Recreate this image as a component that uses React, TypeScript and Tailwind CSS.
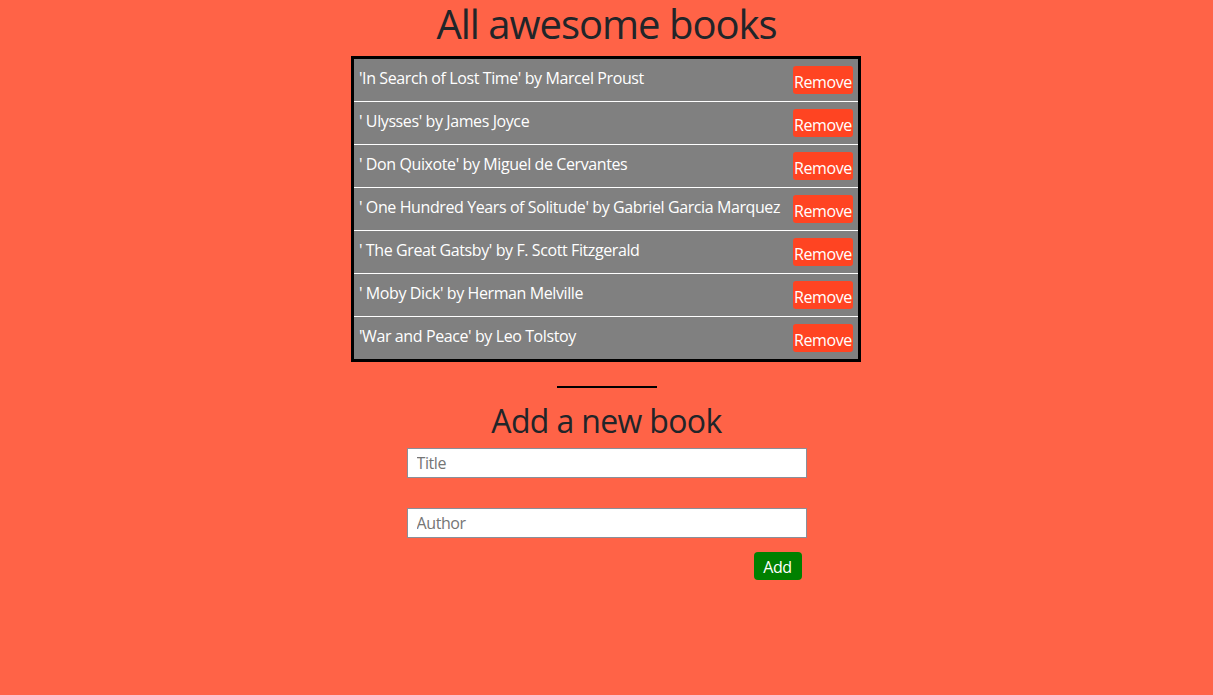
import React from 'react';

const books = [
  "'In Search of Lost Time' by Marcel Proust",
  "' Ulysses' by James Joyce",
  "' Don Quixote' by Miguel de Cervantes",
  "' One Hundred Years of Solitude' by Gabriel Garcia Marquez",
  "' The Great Gatsby' by F. Scott Fitzgerald",
  "' Moby Dick' by Herman Melville",
  "'War and Peace' by Leo Tolstoy",
];

const App = () => {
  return (
    <div className="min-h-[695px] bg-[#ff6347] flex flex-col items-center font-['Open_Sans',sans-serif] text-[#212529]">
      <h1 className="text-[40px] leading-[48px] tracking-[-1px] mb-2">All awesome books</h1>

      <ul className="w-[510px] mr-[1px] border-[3px] border-black bg-[#808080]">
        {books.map((book, i) => (
          <li
            key={i}
            className={`flex items-start justify-between pt-[7px] pl-[5px] pr-[5px] ${i < books.length - 1 ? 'border-b border-white h-[43px]' : 'h-[42px]'}`}
          >
            <span className="text-white text-[16px] leading-6 tracking-[-0.4px] whitespace-nowrap">{book}</span>
            <button className="h-[28px] w-[60px] shrink-0 rounded-[3px] bg-[#ff4422] text-white text-[16px] leading-6 tracking-[-0.4px] pt-[3px] px-0 text-center">
              Remove
            </button>
          </li>
        ))}
      </ul>

      <hr className="w-[100px] border-0 h-[2px] bg-black mt-6" />

      <h2 className="text-[32px] leading-[38px] tracking-[-0.65px] mt-[14px] mb-2">Add a new book</h2>

      <form className="w-[400px] flex flex-col">
        <input
          type="text"
          placeholder="Title"
          className="h-[30px] w-full bg-white border border-[#8a8f99] px-[9px] text-[16px] tracking-[-0.4px] placeholder:text-[#757575] outline-none"
        />
        <input
          type="text"
          placeholder="Author"
          className="h-[30px] w-full bg-white border border-[#8a8f99] px-[9px] text-[16px] tracking-[-0.4px] placeholder:text-[#757575] outline-none mt-[30px]"
        />
        <div className="flex justify-end pr-[5px] mt-[14px]">
          <button type="button" className="h-[28px] w-[48px] rounded-[4px] bg-[#008000] text-white text-[16px] leading-6 tracking-[-0.4px] pt-[2px]">
            Add
          </button>
        </div>
      </form>
    </div>
  );
};

export default App;
